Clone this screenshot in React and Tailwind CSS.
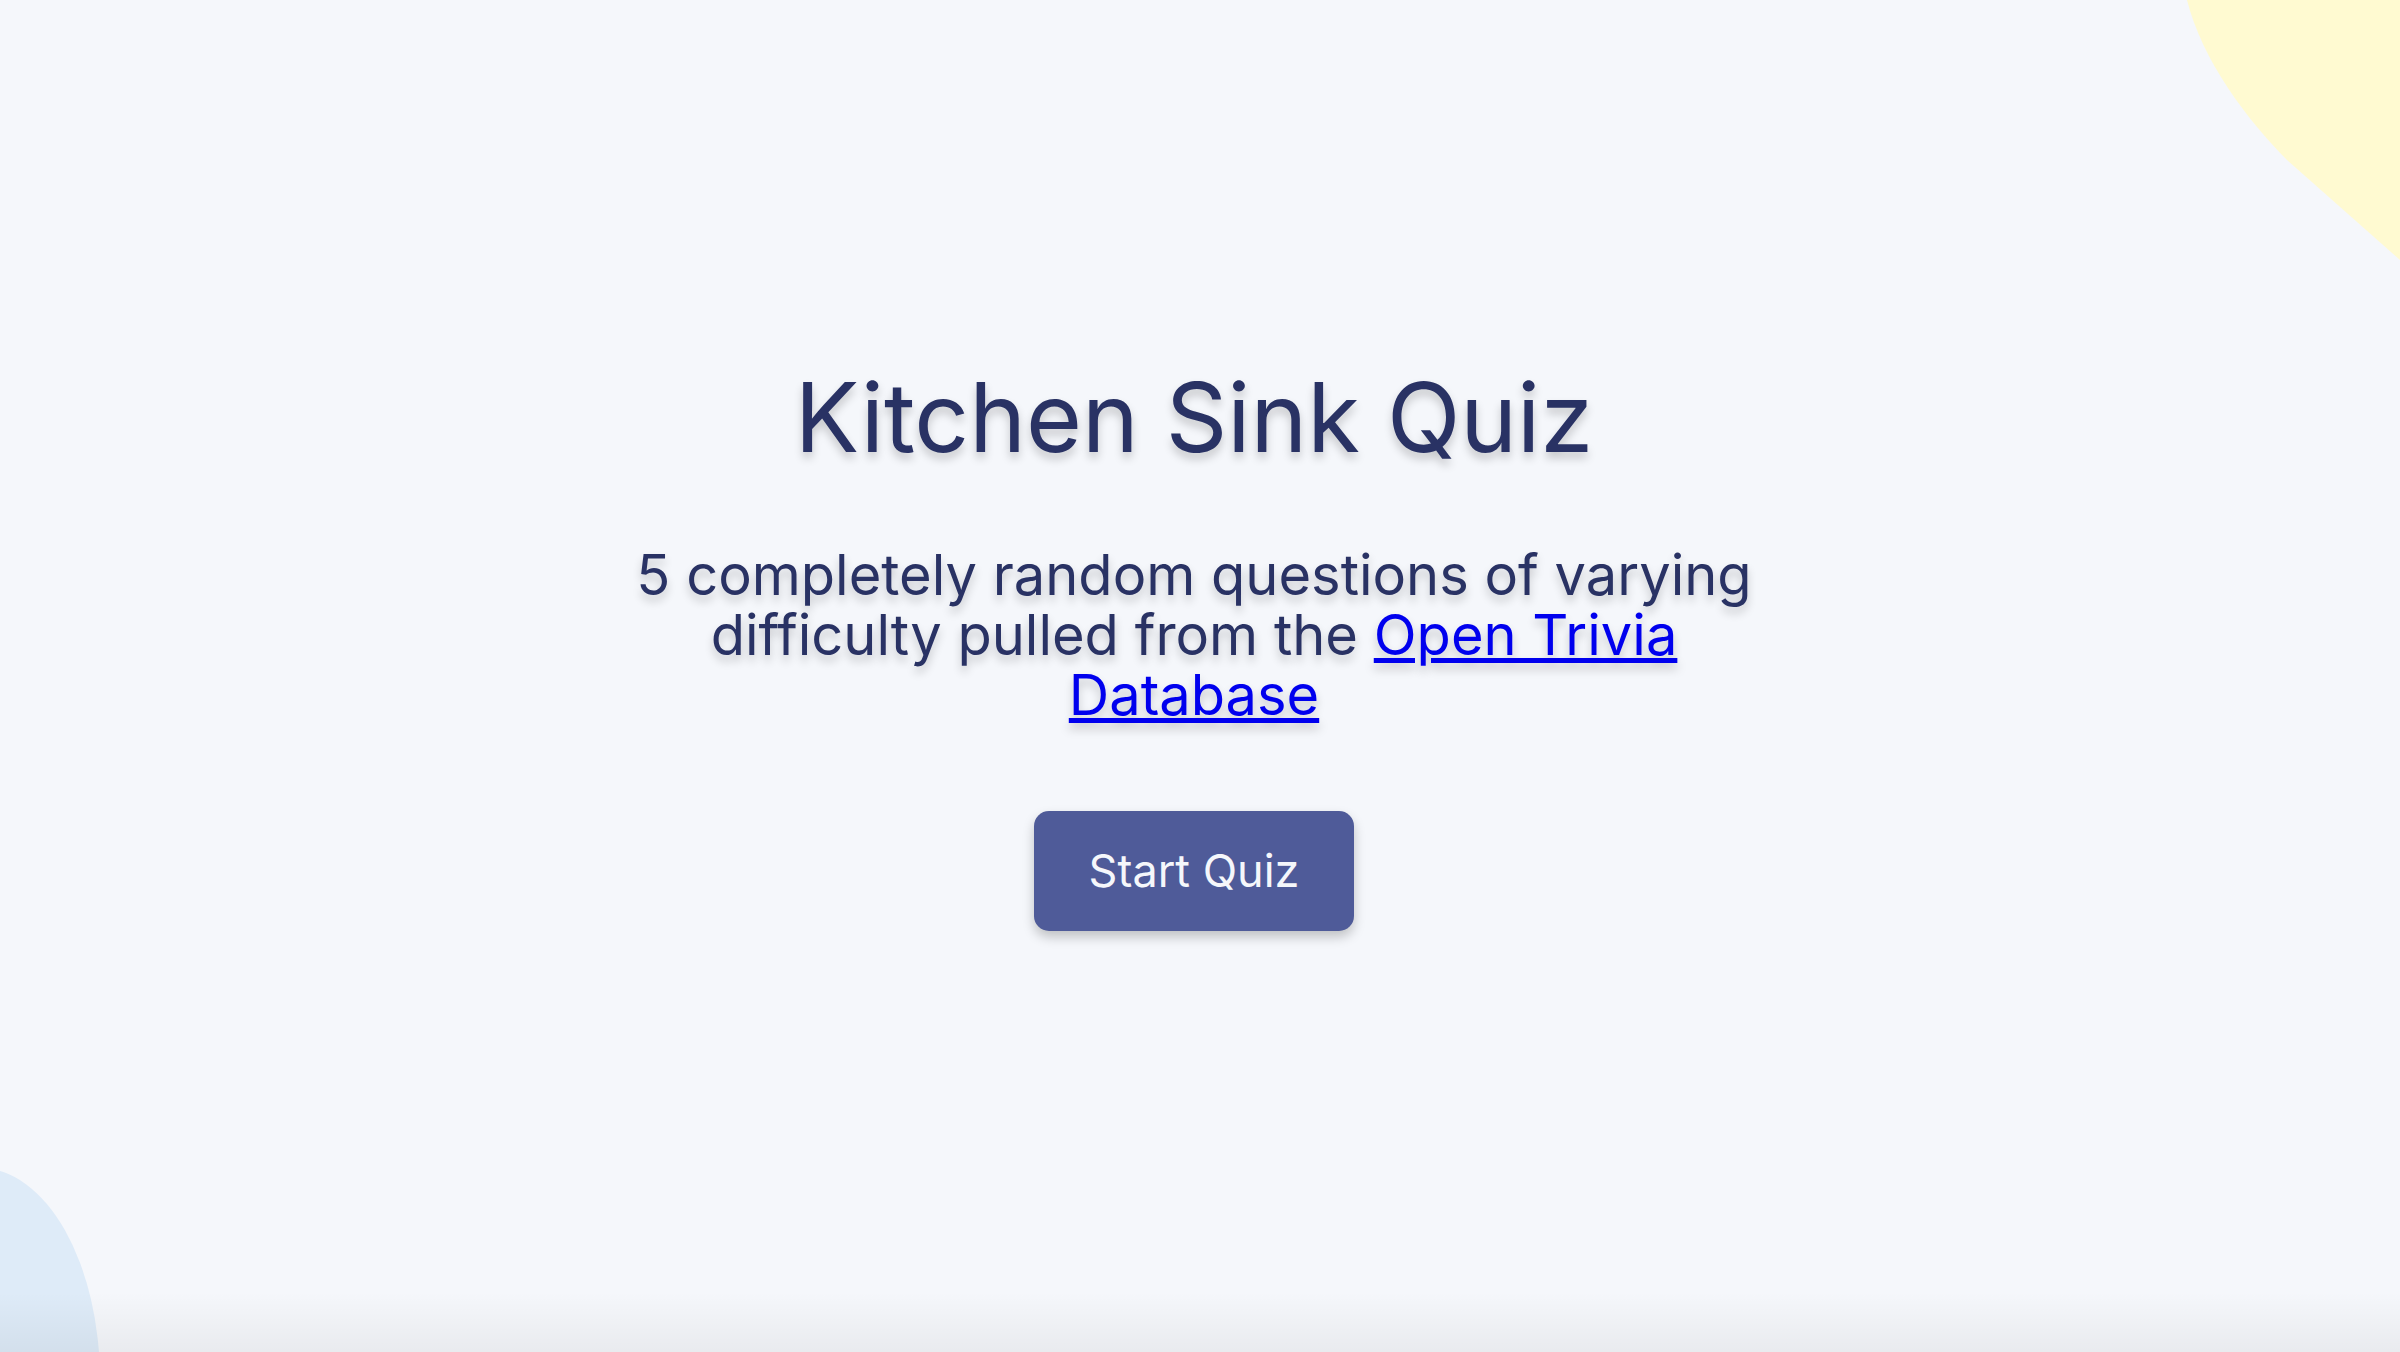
import React from 'react';

function Blobs() {
    return (
        <>
            {/* yellow blob, top right */}
            <svg className="absolute top-0 right-0" width="213" height="260" viewBox="0 0 213 260">
                <path d="M0 0 C15 60 60 120 100 160 L213 260 L213 0 Z" fill="#FFFAD1" />
            </svg>
            {/* blue blob, bottom left */}
            <svg className="absolute bottom-0 left-0" width="100" height="184" viewBox="0 0 100 184">
                <ellipse cx="-20" cy="212" rx="120" ry="212" fill="#DEEBF8" />
            </svg>
        </>
    );
}

export default function App() {
    return (
        <div className="relative min-h-screen overflow-hidden bg-[#F5F7FB] font-['Inter',sans-serif] text-[#293264]">
            <Blobs />

            <main className="relative flex min-h-screen flex-col items-center justify-center pr-[12px] pb-[52px] text-center">
                <h1 className="text-8xl leading-none font-normal [text-shadow:0_6px_10px_rgba(0,0,0,0.2)]">
                    Kitchen Sink Quiz
                </h1>

                <p className="mt-[80px] max-w-[1150px] text-[56px] leading-[60px] [text-shadow:0_6px_10px_rgba(0,0,0,0.2)]">
                    5 completely random questions of varying difficulty pulled from the{' '}
                    <a href="#" className="text-[#0000EE] underline">Open Trivia Database</a>
                </p>

                <button className="mt-[86px] flex h-[120px] w-[320px] items-center justify-center rounded-[15px] bg-[#4F5B99] text-[45px] text-[#F5F7FB] shadow-[0_6px_12px_rgba(0,0,0,0.22)]">
                    Start Quiz
                </button>
            </main>

            {/* faint shade along the bottom edge */}
            <div className="pointer-events-none absolute inset-x-0 bottom-0 h-[60px] bg-linear-to-b from-transparent to-black/5" />
        </div>
    );
}
